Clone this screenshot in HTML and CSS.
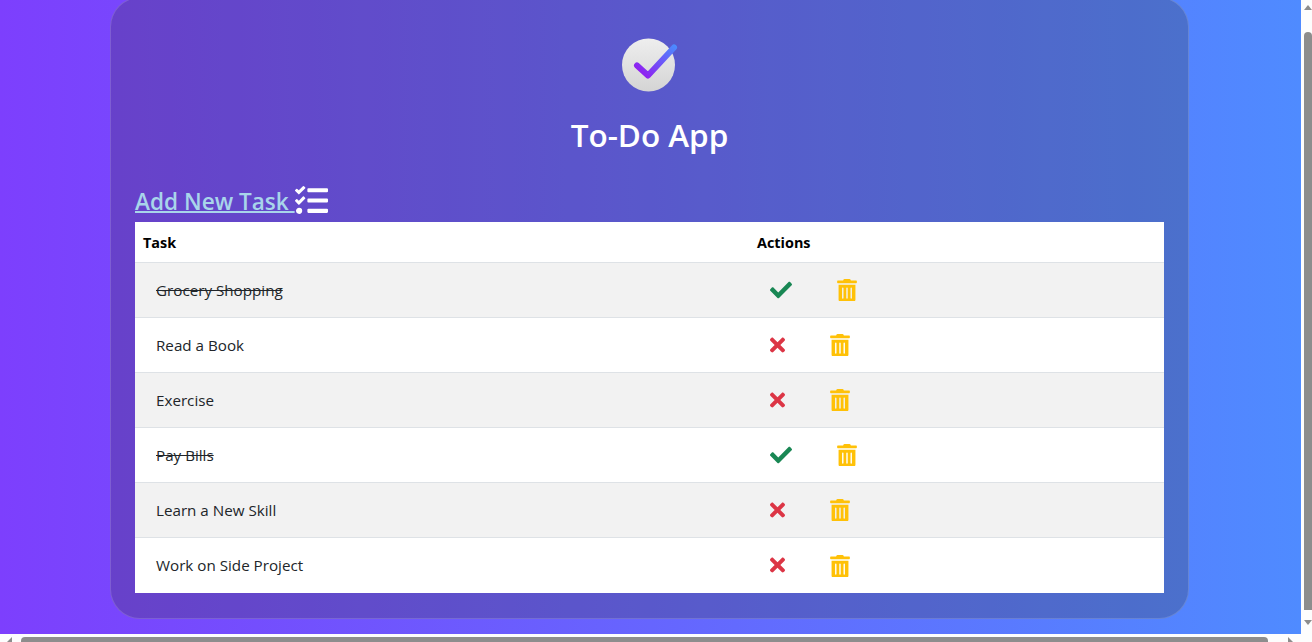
FILE: index.html
```html
<!DOCTYPE html>
<html lang="en">
<head>
  <meta charset="UTF-8">
  <title>To-Do App</title>
  <link rel="stylesheet" href="styles.css">
</head>
<body>
  <div class="page">
    <main class="card">
      <div class="logo">
        <svg width="56" height="56" viewBox="0 0 56 56">
          <defs>
            <linearGradient id="disc" x1="0" y1="0" x2="0" y2="1">
              <stop offset="0" stop-color="#eeeeee"/>
              <stop offset="1" stop-color="#d4d4d4"/>
            </linearGradient>
            <linearGradient id="tick" gradientUnits="userSpaceOnUse" x1="24" y1="42" x2="54" y2="10">
              <stop offset="0" stop-color="#9020f0"/>
              <stop offset="1" stop-color="#4a8cff"/>
            </linearGradient>
          </defs>
          <circle cx="26.5" cy="29" r="26.5" fill="url(#disc)"/>
          <path d="M15 29.5 L26 39.5 L52 11.5" fill="none" stroke="url(#tick)" stroke-width="6" stroke-linecap="round" stroke-linejoin="round"/>
        </svg>
      </div>
      <h1>To-Do App</h1>

      <div class="add-row">
        <a class="add-link" href="#">Add New Task </a><svg class="tasks-icon" viewBox="0 0 512 512"><path d="M139.61 35.5a12 12 0 0 0-17 0L58.93 98.81l-22.7-22.12a12 12 0 0 0-17 0L3.53 92.41a12 12 0 0 0 0 17l47.59 47.4a12.78 12.78 0 0 0 17.61 0l15.59-15.62L156.52 69a12.09 12.09 0 0 0 .09-17zm0 159.19a12 12 0 0 0-17 0l-63.68 63.72-22.7-22.1a12 12 0 0 0-17 0L3.53 252a12 12 0 0 0 0 17L51 316.5a12.77 12.77 0 0 0 17.6 0l15.7-15.69 72.2-72.22a12 12 0 0 0 .09-16.9zM64 368c-26.49 0-48.59 21.5-48.59 48S37.53 464 64 464a48 48 0 0 0 0-96zm432 16H208a16 16 0 0 0-16 16v32a16 16 0 0 0 16 16h288a16 16 0 0 0 16-16v-32a16 16 0 0 0-16-16zm0-320H208a16 16 0 0 0-16 16v32a16 16 0 0 0 16 16h288a16 16 0 0 0 16-16V80a16 16 0 0 0-16-16zm0 160H208a16 16 0 0 0-16 16v32a16 16 0 0 0 16 16h288a16 16 0 0 0 16-16v-32a16 16 0 0 0-16-16z"/></svg>
      </div>

      <svg class="sprites" width="0" height="0">
        <symbol id="i-check" viewBox="0 0 512 512"><path d="M173.898 439.404l-166.4-166.4c-9.997-9.997-9.997-26.206 0-36.204l36.203-36.204c9.997-9.998 26.207-9.998 36.204 0L192 312.69 432.095 72.596c9.997-9.997 26.207-9.997 36.204 0l36.203 36.204c9.997 9.997 9.997 26.206 0 36.204l-294.4 294.401c-9.998 9.997-26.207 9.997-36.204-.001z"/></symbol>
        <symbol id="i-times" viewBox="0 0 352 512"><path d="M242.72 256l100.07-100.07c12.28-12.28 12.28-32.19 0-44.48l-22.24-22.24c-12.28-12.28-32.19-12.28-44.48 0L176 189.28 75.93 89.21c-12.28-12.28-32.19-12.28-44.48 0L9.21 111.45c-12.28 12.28-12.28 32.19 0 44.48L109.28 256 9.21 356.07c-12.28 12.28-12.28 32.19 0 44.48l22.24 22.24c12.28 12.28 32.2 12.28 44.48 0L176 322.72l100.07 100.07c12.28 12.28 32.2 12.28 44.48 0l22.24-22.24c12.28-12.28 12.28-32.19 0-44.48L242.72 256z"/></symbol>
        <symbol id="i-trash" viewBox="0 0 448 512"><path d="M32 464a48 48 0 0 0 48 48h288a48 48 0 0 0 48-48V128H32zm272-256a16 16 0 0 1 32 0v224a16 16 0 0 1-32 0zm-96 0a16 16 0 0 1 32 0v224a16 16 0 0 1-32 0zm-96 0a16 16 0 0 1 32 0v224a16 16 0 0 1-32 0zM432 32H312l-9.4-18.7A24 24 0 0 0 281.1 0H166.8a23.72 23.72 0 0 0-21.4 13.3L136 32H16A16 16 0 0 0 0 48v32a16 16 0 0 0 16 16h416a16 16 0 0 0 16-16V48a16 16 0 0 0-16-16z"/></symbol>
      </svg>

      <table class="tasks">
        <thead>
          <tr><th class="col-task">Task</th><th>Actions</th></tr>
        </thead>
        <tbody>
          <tr>
            <td class="name done">Grocery Shopping</td>
            <td><div class="actions">
              <button class="act"><svg class="ic ic-check"><use href="#i-check"/></svg></button>
              <button class="act"><svg class="ic ic-trash"><use href="#i-trash"/></svg></button>
            </div></td>
          </tr>
          <tr>
            <td class="name">Read a Book</td>
            <td><div class="actions">
              <button class="act"><svg class="ic ic-times"><use href="#i-times"/></svg></button>
              <button class="act"><svg class="ic ic-trash"><use href="#i-trash"/></svg></button>
            </div></td>
          </tr>
          <tr>
            <td class="name">Exercise</td>
            <td><div class="actions">
              <button class="act"><svg class="ic ic-times"><use href="#i-times"/></svg></button>
              <button class="act"><svg class="ic ic-trash"><use href="#i-trash"/></svg></button>
            </div></td>
          </tr>
          <tr>
            <td class="name done">Pay Bills</td>
            <td><div class="actions">
              <button class="act"><svg class="ic ic-check"><use href="#i-check"/></svg></button>
              <button class="act"><svg class="ic ic-trash"><use href="#i-trash"/></svg></button>
            </div></td>
          </tr>
          <tr>
            <td class="name">Learn a New Skill</td>
            <td><div class="actions">
              <button class="act"><svg class="ic ic-times"><use href="#i-times"/></svg></button>
              <button class="act"><svg class="ic ic-trash"><use href="#i-trash"/></svg></button>
            </div></td>
          </tr>
          <tr>
            <td class="name">Work on Side Project</td>
            <td><div class="actions">
              <button class="act"><svg class="ic ic-times"><use href="#i-times"/></svg></button>
              <button class="act"><svg class="ic ic-trash"><use href="#i-trash"/></svg></button>
            </div></td>
          </tr>
        </tbody>
      </table>
    </main>
  </div>

  <!-- window scrollbars -->
  <div class="vbar">
    <span class="arrow arrow-up"></span>
    <span class="vthumb"></span>
    <span class="arrow arrow-down"></span>
  </div>
  <div class="hbar">
    <span class="arrow arrow-left"></span>
    <span class="hthumb"></span>
    <span class="arrow arrow-right"></span>
  </div>
  <div class="corner"></div>
</body>
</html>
```

FILE: styles.css
```css
:root {
  --text: #212529;
  --line: #dee2e6;
  --stripe: #f2f2f2;
  --bar: #8d8d8d;
}
*, *::before, *::after { box-sizing: border-box; }
html, body { height: 100%; }
body {
  margin: 0;
  overflow: hidden;
  display: grid;
  grid-template-columns: 1fr 11px;
  grid-template-rows: 1fr 8px;
  font-family: "Open Sans", "Noto Sans", sans-serif;
  color: var(--text);
}
.page {
  overflow: hidden;
  display: flex;
  justify-content: center;
  align-items: flex-start;
  background: linear-gradient(90deg, #7d3ffd, #4f8bff);
}
.card {
  width: 1079px;
  margin: -3px 0 0 -2px;
  padding: 38px 24px 25px;
  flex-shrink: 0;
  border: 1px solid rgba(255, 255, 255, 0.15);
  border-radius: 30px;
  background: rgba(50, 50, 50, 0.25);
}
.logo { display: flex; justify-content: center; height: 56px; }
.logo svg { display: block; }
h1 {
  margin: 23px 0 0;
  font-size: 31.5px;
  line-height: 40px;
  font-weight: 600;
  text-align: center;
  color: #fff;
}
.add-row {
  display: flex;
  align-items: flex-start;
  height: 42px;
  margin-top: 25px;
}
.add-link {
  margin-top: 7px;
  font-size: 22.6px;
  font-weight: 600;
  line-height: 30px;
  color: #a8d5ea;
  white-space: pre;
  text-decoration-thickness: 2px;
}
.tasks-icon { width: 33px; height: 33px; fill: #fff; margin: 4px 0 0 0; }
.sprites { position: absolute; }
.tasks {
  width: 100%;
  border-collapse: collapse;
  background: #fff;
  font-size: 15.2px;
}
.col-task { width: 614px; }
th {
  padding: 9px 8px 7px;
  height: 40px;
  text-align: left;
  font-size: 14.4px;
  font-weight: 700;
  color: #000;
  border-bottom: 1px solid var(--line);
}
td {
  padding: 8px;
  height: 55px;
  border-bottom: 1px solid var(--line);
}
tbody tr:last-child td { border-bottom: 0; height: 56px; }
tbody tr:nth-child(odd) td { background: var(--stripe); }
td.name { padding-left: 21px; }
.done { text-decoration: line-through; }
.actions { display: flex; gap: 21px; padding-left: 1px; }
.act {
  display: flex;
  align-items: center;
  height: 38px;
  padding: 0 12px;
  border: 0;
  background: none;
}
.ic { display: block; height: 22.5px; }
.ic-check { width: 22px; height: 22px; fill: #198754; }
.ic-times { width: 15px; height: 22px; fill: #dc3545; }
.ic-trash { width: 20px; margin-top: 1px; fill: #ffc107; }

.vbar {
  grid-row: 1;
  grid-column: 2;
  display: flex;
  flex-direction: column;
  align-items: center;
  padding-left: 3px;
  background: #fdfdfd;
}
.vthumb { flex: 1; width: 8px; margin: 22px 0 10px; border-radius: 4px 4px 0 0; background: var(--bar); }
.hbar {
  grid-row: 2;
  grid-column: 1;
  display: flex;
  align-items: flex-start;
  overflow: hidden;
  background: #fdfdfd;
}
.hthumb { flex: 1; height: 8px; margin: 3px 20px 0 9px; border-radius: 4px 4px 0 0; background: var(--bar); }
.corner { background: #fdfdfd; }
.arrow { display: block; width: 0; height: 0; flex-shrink: 0; border: 4px solid transparent; }
.arrow-up { margin-top: 5px; border-top: 0; border-bottom: 5px solid var(--bar); }
.arrow-down { margin-bottom: 9px; border-bottom: 0; border-top: 5px solid var(--bar); }
.arrow-left { margin: 3px 0 0 7px; border-width: 5px; border-left: 0; border-right-color: var(--bar); }
.arrow-right { margin: 3px 8px 0 0; border-width: 5px; border-right: 0; border-left-color: var(--bar); }
```
